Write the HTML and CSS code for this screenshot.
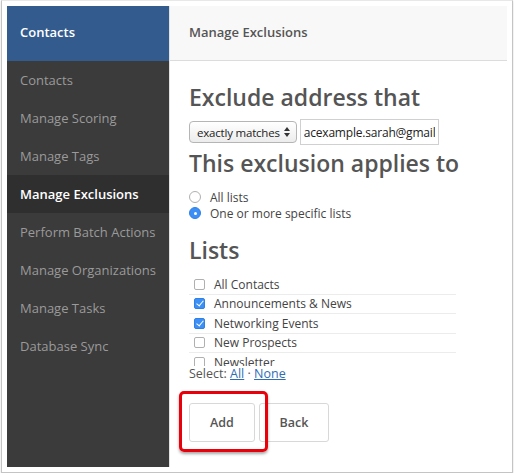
FILE: index.html
```html
<!DOCTYPE html>
<html lang="en">
<head>
    <title>Manage Exclusions</title>
    <link rel="stylesheet" href="styles.css">
</head>
<body>
    <div class="frame">
        <div class="app">
            <div class="sidebar">
                <div class="sidebar-title">Contacts</div>
                <a class="nav-item">Contacts</a>
                <a class="nav-item">Manage Scoring</a>
                <a class="nav-item">Manage Tags</a>
                <a class="nav-item active">Manage Exclusions</a>
                <a class="nav-item">Perform Batch Actions</a>
                <a class="nav-item">Manage Organizations</a>
                <a class="nav-item">Manage Tasks</a>
                <a class="nav-item">Database Sync</a>
            </div>
            <div class="main">
                <div class="main-header">Manage Exclusions</div>
                <div class="main-body">
                    <h2>Exclude address that</h2>
                    <div class="match-row">
                        <div class="select">
                            exactly matches
                            <svg class="arrows" width="6" height="10" viewBox="0 0 6 10">
                                <path d="M0 4 L3 0 L6 4 Z M0 6 L3 10 L6 6 Z" fill="#333"/>
                            </svg>
                        </div>
                        <input type="text" class="address" value="acexample.sarah@gmail">
                    </div>

                    <h2 class="applies">This exclusion applies to</h2>
                    <label class="radio-row"><input type="radio" name="scope"> All lists</label>
                    <label class="radio-row"><input type="radio" name="scope" checked> One or more specific lists</label>

                    <h2 class="lists-title">Lists</h2>
                    <div class="list-box">
                        <label class="list-row"><input type="checkbox"> All Contacts</label>
                        <label class="list-row"><input type="checkbox" checked> Announcements &amp; News</label>
                        <label class="list-row"><input type="checkbox" checked> Networking Events</label>
                        <label class="list-row"><input type="checkbox"> New Prospects</label>
                        <label class="list-row"><input type="checkbox"> Newsletter</label>
                        <label class="list-row"><input type="checkbox"> Partners</label>
                    </div>
                    <div class="select-links">Select: <a href="#">All</a> · <a href="#">None</a></div>

                    <div class="actions">
                        <button class="btn">Add</button>
                        <button class="btn back">Back</button>
                        <div class="highlight"></div>
                    </div>
                </div>
            </div>
        </div>
    </div>
</body>
</html>
```

FILE: styles.css
```css
body {
    margin: 0;
    padding: 0;
    background: #ffffff;
    font-family: "Open Sans", Arial, sans-serif;
    color: #555;
}

.frame {
    width: 500px;
    margin-left: 1px;
    padding: 5px;
    border: 1px solid #c4c4c4;
    border-top-color: #e8e8e8;
    box-shadow: 0 1px 2px rgba(0, 0, 0, 0.15);
}

.app {
    display: flex;
    height: 461px;
}

.sidebar {
    width: 162px;
    background: #3b3b3b;
    flex-shrink: 0;
}

.sidebar-title {
    height: 55px;
    line-height: 53px;
    padding-left: 13px;
    background: #335b8d;
    color: #ffffff;
    font-size: 13px;
    font-weight: 600;
}

.nav-item {
    display: block;
    height: 38px;
    line-height: 38px;
    padding-left: 13px;
    font-size: 13px;
    color: #9a9a9a;
}

.nav-item.active {
    background: #2f2f2f;
    color: #ffffff;
    font-weight: 600;
}

.main {
    flex: 1;
    border-left: 1px solid #e2e2e2;
    background: #ffffff;
}

.main-header {
    height: 54px;
    line-height: 53px;
    padding-left: 19px;
    background: #f8f8f8;
    border-bottom: 1px solid #dcdcdc;
    font-size: 13px;
    font-weight: 600;
    color: #555;
}

.main-body {
    padding: 23px 19px 0;
}

h2 {
    margin: 0;
    font-size: 23px;
    line-height: 27px;
    font-weight: 600;
    color: #555;
}

.match-row {
    display: flex;
    align-items: center;
    gap: 3px;
    margin-top: 8px;
}

.select {
    display: flex;
    align-items: center;
    gap: 4px;
    height: 20px;
    padding: 0 6px 0 7px;
    border: 1px solid #b5b5b5;
    border-radius: 4px;
    background: linear-gradient(#ffffff, #ececec);
    font-size: 11.5px;
    letter-spacing: -0.2px;
    color: #222;
}

.address {
    height: 26px;
    box-sizing: border-box;
    width: 139px;
    padding: 0 3px;
    border: 1px solid #d0d0d0;
    font-family: "Open Sans", Arial, sans-serif;
    font-size: 12px;
    letter-spacing: -0.2px;
    color: #222;
}

.applies {
    margin-top: 5px;
}

.radio-row {
    display: flex;
    align-items: center;
    gap: 9px;
    height: 16px;
    font-size: 12px;
    color: #444;
}

.applies + .radio-row {
    margin-top: 12px;
}

input[type="radio"],
input[type="checkbox"] {
    appearance: none;
    margin: 0;
    flex-shrink: 0;
    background: #ffffff;
    border: 1px solid #b0b0b0;
    position: relative;
}

input[type="radio"] {
    width: 12px;
    height: 12px;
    border-radius: 50%;
}

input[type="radio"]:checked {
    background: #3b8ff5;
    border-color: #3080e8;
}

input[type="radio"]:checked::after {
    content: "";
    position: absolute;
    left: 3.5px;
    top: 3.5px;
    width: 3px;
    height: 3px;
    border-radius: 50%;
    background: #ffffff;
}

input[type="checkbox"] {
    width: 11px;
    height: 11px;
    border-radius: 2px;
}

input[type="checkbox"]:checked {
    background: #3b8ff5;
    border-color: #3080e8;
}

input[type="checkbox"]:checked::after {
    content: "";
    position: absolute;
    left: 3px;
    top: 0px;
    width: 3px;
    height: 6px;
    border: solid #ffffff;
    border-width: 0 1.5px 1.5px 0;
    transform: rotate(40deg);
}

.lists-title {
    margin-top: 16px;
}

.list-box {
    width: 267px;
    height: 91px;
    margin-top: 11px;
    overflow: hidden;
}

.list-row {
    display: flex;
    align-items: center;
    gap: 9px;
    height: 18.5px;
    padding-left: 5px;
    border-bottom: 1px solid #ececec;
    font-size: 12px;
    color: #444;
}

.select-links {
    font-size: 12.5px;
    line-height: 16px;
    color: #555;
}

.select-links a {
    color: #2f6db5;
}

.actions {
    position: relative;
    display: flex;
    gap: 4px;
    margin-top: 21px;
}

.btn {
    width: 66px;
    height: 39px;
    background: #ffffff;
    border: 1px solid #d8d8d8;
    border-radius: 3px;
    font-family: "Open Sans", Arial, sans-serif;
    font-size: 12.5px;
    font-weight: 600;
    color: #555;
}

.btn.back {
    width: 70px;
}

.highlight {
    position: absolute;
    left: -10px;
    top: -12px;
    width: 83px;
    height: 55px;
    border: 3px solid #e8000b;
    border-radius: 5px;
    box-shadow: 0 2px 3px rgba(0, 0, 0, 0.35);
}
```
